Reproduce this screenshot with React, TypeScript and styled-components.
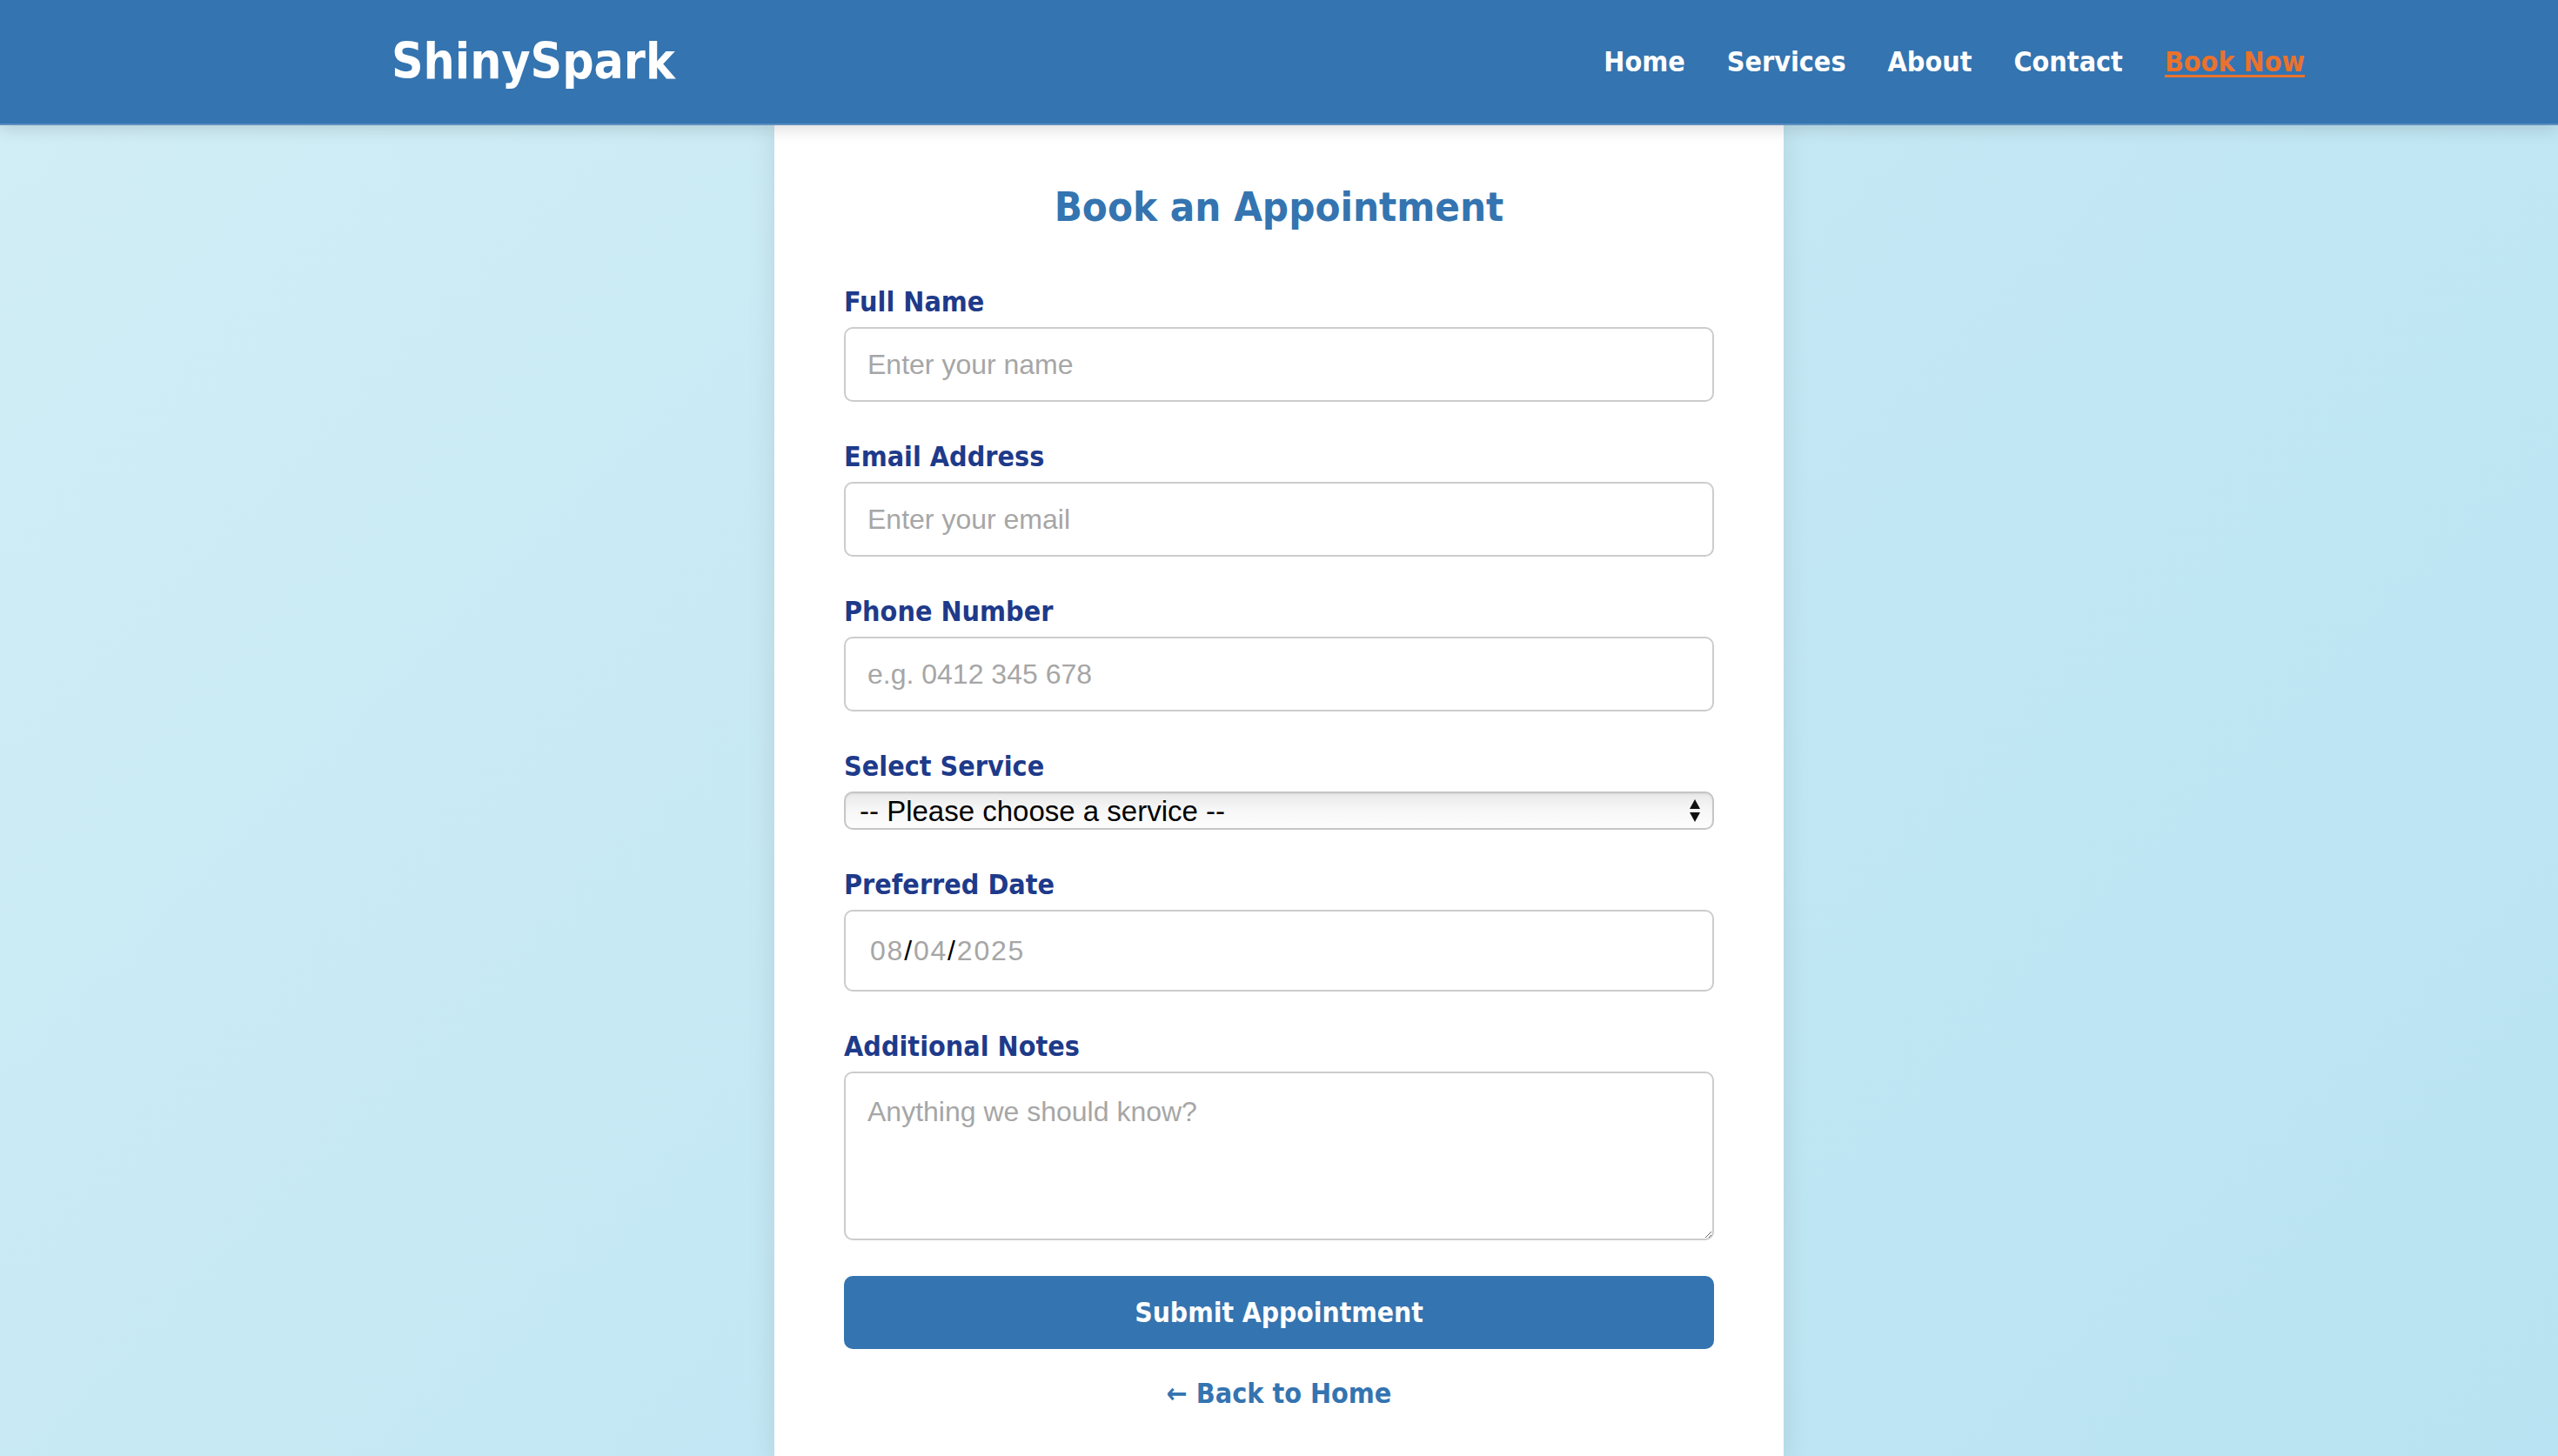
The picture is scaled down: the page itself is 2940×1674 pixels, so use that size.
import React from "react";
import styled, { createGlobalStyle } from "styled-components";

const GlobalStyle = createGlobalStyle`
  html, body { margin: 0; padding: 0; }
  body {
    min-height: 100vh;
    background: linear-gradient(135deg, #d2eef6 0%, #c4e8f4 50%, #b9e3f2 100%);
    font-family: "DejaVu Sans", "Liberation Sans", sans-serif;
    overflow: hidden;
  }
  * { box-sizing: border-box; }
`;

const heading = `
  font-family: "DejaVu Sans Condensed", "DejaVu Sans", sans-serif;
  font-stretch: condensed;
  font-weight: 700;
`;

const Page = styled.div`
  display: flex;
  flex-direction: column;
  min-height: 1674px;
`;

const Header = styled.header`
  position: relative;
  z-index: 2;
  height: 144px;
  background: #3474b0;
  border-bottom: 2px solid #5b8ec0;
  box-shadow: 0 4px 18px rgba(0, 0, 0, 0.14);
  display: flex;
  align-items: center;
  justify-content: space-between;
  padding: 0 291px 0 450px;
`;

const Logo = styled.div`
  ${heading};
  color: #ffffff;
  font-size: 56.5px;
  line-height: 1;
`;

const Nav = styled.nav`
  display: flex;
  align-items: center;
  gap: 48px;
`;

const NavLink = styled.a<{ $active?: boolean }>`
  ${heading};
  font-size: 32px;
  color: ${(p) => (p.$active ? "#ea722c" : "#ffffff")};
  text-decoration: ${(p) => (p.$active ? "underline" : "none")};
  text-underline-offset: 4px;
  text-decoration-thickness: 3px;
  cursor: pointer;
`;

const Card = styled.main`
  position: relative;
  z-index: 1;
  width: 1160px;
  margin: 0 auto;
  flex: 1;
  background: #ffffff;
  box-shadow: 0 0 30px rgba(0, 0, 0, 0.1);
  padding: 64px 80px 60px;
`;

const Title = styled.h2`
  ${heading};
  margin: 0 0 60px;
  text-align: center;
  color: #3474b0;
  font-size: 47px;
  line-height: 60px;
`;

const Form = styled.form`
  display: flex;
  flex-direction: column;
`;

const Group = styled.div`
  display: flex;
  flex-direction: column;
  margin-bottom: 44px;
`;

const Label = styled.label`
  ${heading};
  display: block;
  color: #1e3a8a;
  font-size: 32px;
  line-height: 38px;
  margin-bottom: 10px;
`;

const fieldBase = `
  width: 100%;
  border: 2px solid #cccccc;
  border-radius: 10px;
  background: #ffffff;
  font-family: "Liberation Sans", Arial, sans-serif;
  font-size: 32px;
  color: #222;
  outline: none;
  &::placeholder { color: #a6a6a6; }
`;

const Input = styled.input`
  ${fieldBase};
  height: 86px;
  padding: 0 25px;
`;

const SelectWrap = styled.div`
  position: relative;
  height: 44px;
`;

const Select = styled.select`
  ${fieldBase};
  appearance: none;
  -webkit-appearance: none;
  height: 44px;
  padding: 0 50px 0 16px;
  font-size: 33px;
  color: #000;
  border-color: #c6c6c6;
  background: linear-gradient(to bottom, #e9e9e9 0%, #f6f6f6 45%, #fdfdfd 100%);
  box-shadow: inset 0 1px 2px rgba(0, 0, 0, 0.08);
`;

const SelectArrows = styled.svg`
  position: absolute;
  right: 15px;
  top: 50%;
  transform: translateY(-50%);
  pointer-events: none;
`;

const DateField = styled.div`
  ${fieldBase};
  height: 94px;
  padding: 0 28px;
  display: flex;
  align-items: center;
  letter-spacing: 1.8px;
`;

const DatePart = styled.span`
  color: #a6a6a6;
`;

const DateSep = styled.span`
  color: #000;
`;

const TextArea = styled.textarea`
  ${fieldBase};
  display: block;
  height: 194px;
  padding: 26px 25px 22px;
  resize: vertical;
  line-height: 1.15;
`;

const Submit = styled.button`
  ${heading};
  margin-top: -3px;
  height: 84px;
  width: 100%;
  border: none;
  border-radius: 10px;
  background: #3474b0;
  color: #ffffff;
  font-size: 31.5px;
  cursor: pointer;
`;

const BackLink = styled.a`
  ${heading};
  display: block;
  margin-top: 32px;
  text-align: center;
  color: #3474b0;
  font-size: 32px;
  line-height: 38px;
  text-decoration: none;
`;

export default function App() {
  return (
    <Page>
      <GlobalStyle />
      <Header>
        <Logo>ShinySpark</Logo>
        <Nav>
          <NavLink>Home</NavLink>
          <NavLink>Services</NavLink>
          <NavLink>About</NavLink>
          <NavLink>Contact</NavLink>
          <NavLink $active>Book Now</NavLink>
        </Nav>
      </Header>
      <Card>
        <Title>Book an Appointment</Title>
        <Form onSubmit={(e) => e.preventDefault()}>
          <Group>
            <Label>Full Name</Label>
            <Input placeholder="Enter your name" />
          </Group>
          <Group>
            <Label>Email Address</Label>
            <Input placeholder="Enter your email" />
          </Group>
          <Group>
            <Label>Phone Number</Label>
            <Input placeholder="e.g. 0412 345 678" />
          </Group>
          <Group>
            <Label>Select Service</Label>
            <SelectWrap>
              <Select defaultValue="">
                <option value="">-- Please choose a service --</option>
              </Select>
              <SelectArrows width="14" height="28" viewBox="0 0 14 28">
                <path d="M7 1 L13 12 L1 12 Z" fill="#111" />
                <path d="M1 16 L13 16 L7 27 Z" fill="#111" />
              </SelectArrows>
            </SelectWrap>
          </Group>
          <Group>
            <Label>Preferred Date</Label>
            <DateField>
              <DatePart>08</DatePart>
              <DateSep>/</DateSep>
              <DatePart>04</DatePart>
              <DateSep>/</DateSep>
              <DatePart>2025</DatePart>
            </DateField>
          </Group>
          <Group>
            <Label>Additional Notes</Label>
            <TextArea placeholder="Anything we should know?" />
          </Group>
          <Submit type="submit">Submit Appointment</Submit>
        </Form>
        <BackLink>← Back to Home</BackLink>
      </Card>
    </Page>
  );
}
